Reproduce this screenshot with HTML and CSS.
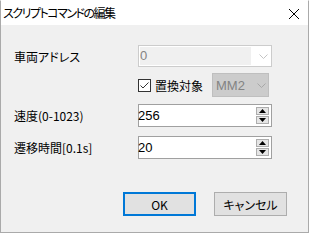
FILE: index.html
```html
<!DOCTYPE html>
<html lang="ja">
<head>
<meta charset="utf-8">
<link rel="stylesheet" href="styles.css">
</head>
<body>
<div class="win">
  <div class="titlebar">
    <span class="title">スクリプトコマンドの編集</span>
    <svg class="close" width="12" height="12" viewBox="0 0 12 12"><path d="M1 1 L11 11 M11 1 L1 11" stroke="#000" stroke-width="1" fill="none"/></svg>
  </div>
  <div class="content">
    <div class="row r1">
      <span class="lbl">車両アドレス</span>
      <div class="combo wide">
        <span class="field">0</span>
        <svg class="arrow" width="9" height="5" viewBox="0 0 9 5"><path d="M0.5 0.5 L4.5 4.5 L8.5 0.5" stroke="#c4c4c4" fill="none"/></svg>
      </div>
    </div>
    <div class="row r2">
      <span class="lbl"></span>
      <span class="check"><svg width="11" height="11" viewBox="0 0 11 11"><path d="M1.5 5.5 L4 8 L9.5 2.5" stroke="#333" stroke-width="1" fill="none"/></svg></span>
      <span class="chk-label">置換対象</span>
      <div class="combo small">
        <span class="mm">MM2</span>
        <svg class="arrow" width="9" height="5" viewBox="0 0 9 5"><path d="M0.5 0.5 L4.5 4.5 L8.5 0.5" stroke="#a8a8a8" fill="none"/></svg>
      </div>
    </div>
    <div class="row r3">
      <span class="lbl">速度(0-1023)</span>
      <div class="spin">
        <span class="val">256</span>
        <div class="btns">
          <span class="sb"><svg width="7" height="4" viewBox="0 0 7 4"><path d="M0 4 L3.5 0 L7 4 Z" fill="#000"/></svg></span>
          <span class="sb"><svg width="7" height="4" viewBox="0 0 7 4"><path d="M0 0 L3.5 4 L7 0 Z" fill="#000"/></svg></span>
        </div>
      </div>
    </div>
    <div class="row r4">
      <span class="lbl">遷移時間[0.1s]</span>
      <div class="spin">
        <span class="val">20</span>
        <div class="btns">
          <span class="sb"><svg width="7" height="4" viewBox="0 0 7 4"><path d="M0 4 L3.5 0 L7 4 Z" fill="#000"/></svg></span>
          <span class="sb"><svg width="7" height="4" viewBox="0 0 7 4"><path d="M0 0 L3.5 4 L7 0 Z" fill="#000"/></svg></span>
        </div>
      </div>
    </div>
    <div class="buttons">
      <button class="btn default">OK</button>
      <button class="btn">キャンセル</button>
    </div>
  </div>
</div>
</body>
</html>
```
FILE: styles.css
```css
html, body {
  margin: 0;
  padding: 0;
  background: #ffffff;
}
.win {
  width: 307px;
  height: 231px;
  border: 1px solid #aaaaaa;
  border-top-color: #ffffff;
  background: #f0f0f0;
  display: flex;
  flex-direction: column;
  font-family: "Noto Sans CJK JP", "Liberation Sans", sans-serif;
  font-size: 12px;
  color: #000;
  font-feature-settings: "palt";
}
.titlebar {
  height: 25px;
  background: #ffffff;
  display: flex;
  align-items: center;
  justify-content: space-between;
  padding: 0 8px 0 2px;
  margin-top: -1px;
}
.title {
  font-size: 12px;
  line-height: 14px;
  margin-top: 1px;
  letter-spacing: -1.5px;
}
.close {
  display: block;
  margin-top: 2px;
}
.content {
  flex: 1;
  display: flex;
  flex-direction: column;
  padding: 20px 0 0 13px;
}
.row {
  display: flex;
  align-items: center;
}
.lbl {
  width: 124px;
  flex: none;
}
.r1 { height: 22px; }
.r2 { height: 24px; margin-top: 6px; }
.r3 { height: 23px; margin-top: 7px; }
.r4 { height: 23px; margin-top: 9px; }
.combo {
  box-sizing: border-box;
  height: 100%;
  border: 1px solid #cccccc;
  display: flex;
  align-items: center;
  position: relative;
}
.combo.wide {
  width: 134px;
  background: #ffffff;
  padding: 1px;
}
.combo .field {
  width: 111px;
  height: 100%;
  background: #f0f0f0;
  color: #838383;
  font-family: "Liberation Sans", sans-serif;
  font-size: 13px;
  line-height: 18px;
  padding-left: 0;
}
.combo .arrow {
  margin-left: 8px;
}
.combo.small {
  width: 57px;
  margin-left: 9px;
  background: #cccccc;
  border-color: #bfbfbf;
  padding-left: 3px;
}
.combo.small .arrow {
  margin-left: 12px;
}
.mm {
  color: #838383;
  font-family: "Liberation Sans", sans-serif;
  font-size: 13px;
}
.check {
  box-sizing: border-box;
  width: 13px;
  height: 13px;
  border: 1px solid #333333;
  background: #ffffff;
  display: flex;
  align-items: center;
  justify-content: center;
  flex: none;
}
.check svg { display: block; }
.chk-label {
  margin-left: 4px;
}
.spin {
  box-sizing: border-box;
  width: 134px;
  height: 100%;
  border: 1px solid #a0a0a0;
  background: #ffffff;
  display: flex;
  align-items: center;
  padding: 2px 2px 2px 0;
}
.val {
  flex: 1;
  font-family: "Liberation Sans", sans-serif;
  font-size: 13px;
  margin-left: -1px;
}
.btns {
  display: flex;
  flex-direction: column;
  gap: 1px;
  height: 100%;
}
.sb {
  box-sizing: border-box;
  width: 13px;
  flex: 1;
  border: 1px solid #adadad;
  background: #e5e5e5;
  display: flex;
  align-items: center;
  justify-content: center;
}
.sb svg { display: block; }
.buttons {
  display: flex;
  justify-content: flex-end;
  gap: 18px;
  margin-top: 33px;
  padding-right: 21px;
}
.btn {
  box-sizing: border-box;
  width: 73px;
  height: 24px;
  border: 1px solid #adadad;
  background: #e1e1e1;
  font-family: "Noto Sans CJK JP", "Liberation Sans", sans-serif;
  font-feature-settings: "palt";
  font-size: 12px;
  color: #000;
  padding: 0;
  margin: 0;
}
.btn.default {
  border: 2px solid #0078d7;
}
```
